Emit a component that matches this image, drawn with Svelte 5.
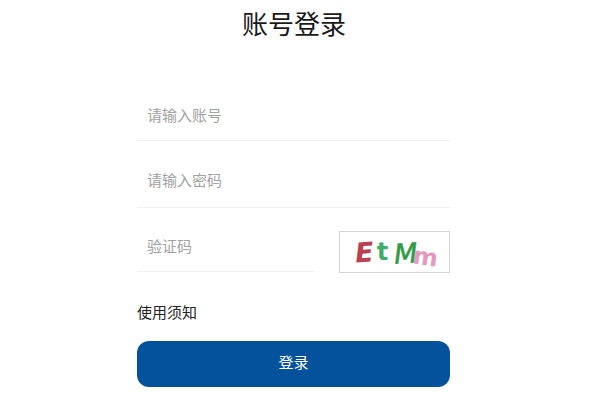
<script>
    let account = $state('');
    let password = $state('');
    let code = $state('');

    const captcha = [
        { ch: 'E', cls: 'c-red' },
        { ch: 't', cls: 'c-green' },
        { ch: 'M', cls: 'c-dark' },
        { ch: 'm', cls: 'c-pink' }
    ];
</script>

<div class="page">
    <h1 class="title">账号登录</h1>

    <form class="login-form" onsubmit={(e) => e.preventDefault()}>
        <input class="field" type="text" placeholder="请输入账号" bind:value={account} />
        <input class="field" type="password" placeholder="请输入密码" bind:value={password} />

        <div class="code-row">
            <input class="field code-input" type="text" placeholder="验证码" bind:value={code} />
            <div class="captcha">
                {#each captcha as item}
                    <span class={item.cls}>{item.ch}</span>
                {/each}
            </div>
        </div>

        <div class="notice">使用须知</div>
        <button class="submit" type="submit">登录</button>
    </form>
</div>

<style>
    :global(body) {
        margin: 0;
        background: #fff;
    }

    .page {
        width: 600px;
        height: 400px;
        overflow: hidden;
        font-family: "Liberation Sans", "Noto Sans CJK SC", sans-serif;
    }

    .title {
        width: 588px;
        margin: 0;
        padding-top: 8px;
        font-size: 26px;
        font-weight: 400;
        line-height: 34px;
        text-align: center;
        color: #1a1a1a;
    }

    .login-form {
        display: flex;
        flex-direction: column;
        width: 313px;
        margin: 50px 0 0 137px;
    }

    .field {
        box-sizing: border-box;
        width: 100%;
        height: 49px;
        padding: 0 10px 2px;
        border: none;
        border-bottom: 1px solid #eeeeee;
        outline: none;
        font-family: inherit;
        font-size: 15px;
        color: #333;
        background: transparent;
    }

    .field + .field {
        height: 67px;
        padding-top: 14px;
    }

    .field::placeholder {
        color: #a2a2a2;
        opacity: 1;
    }

    .code-row {
        display: flex;
        justify-content: space-between;
        align-items: flex-start;
        margin-top: 23px;
    }

    .code-input {
        width: 177px;
        height: 41px;
        padding-bottom: 10px;
    }

    .captcha {
        box-sizing: border-box;
        display: flex;
        justify-content: center;
        align-items: center;
        width: 111px;
        height: 42px;
        padding-left: 4px;
        border: 1px solid #d4d4d4;
        font-family: "DejaVu Sans", sans-serif;
        font-weight: 700;
        font-size: 27px;
        letter-spacing: 0;
    }

    .captcha span {
        display: inline-block;
    }

    .c-red {
        color: #b8404f;
        font-style: italic;
        transform: rotate(-4deg);
    }

    .c-green {
        margin-left: 3px;
        margin-right: 6px;
        color: #3fae68;
        font-size: 24px;
    }

    .c-dark {
        color: #2f9a45;
        font-style: italic;
        font-weight: 400;
        -webkit-text-stroke: 0.6px #2f9a45;
        transform: translateY(1px) rotate(-4deg);
    }

    .c-pink {
        margin-left: -5px;
        color: #e49ac0;
        font-size: 24px;
        transform: translateY(5px) rotate(8deg);
    }

    .notice {
        margin-top: 30px;
        font-size: 15px;
        line-height: 20px;
        color: #222;
    }

    .submit {
        height: 46px;
        margin-top: 18px;
        padding: 0 0 6px;
        border: none;
        border-radius: 12px;
        font-family: inherit;
        font-size: 15px;
        color: #fff;
        background: #03529b;
        cursor: pointer;
    }
</style>
